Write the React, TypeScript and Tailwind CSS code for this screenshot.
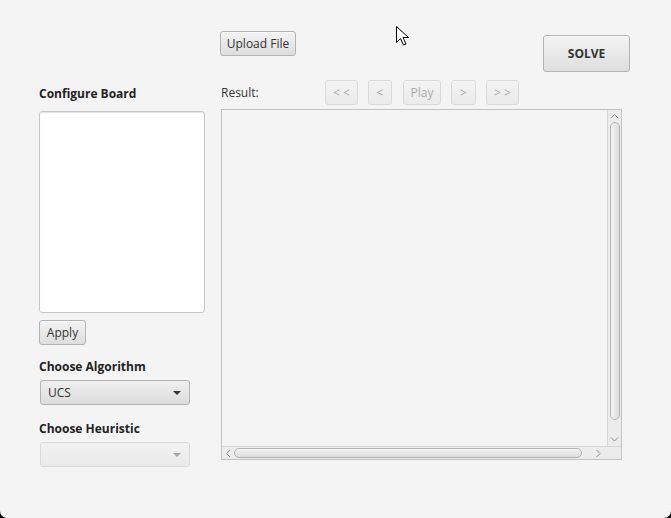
const font = { fontFamily: '"Open Sans", "Noto Sans", Arial, sans-serif' };

function Btn({ children, className = "" }: { children: React.ReactNode; className?: string }) {
  return (
    <div
      className={
        "flex items-center justify-center rounded-[3px] border border-[#b3b3b3] bg-gradient-to-b from-[#f3f3f3] to-[#dedede] text-[12px] text-[#333] shadow-[inset_0_1px_0_#fafafa] " +
        className
      }
    >
      {children}
    </div>
  );
}

function Combo({ value, disabled }: { value?: string; disabled?: boolean }) {
  return (
    <div
      className={
        "ml-px flex h-[25px] w-[150px] items-center justify-between rounded-[3px] border border-[#b3b3b3] bg-gradient-to-b from-[#f0f0f0] to-[#dcdcdc] pl-[7px] pr-[8px] text-[12px] text-[#333] " +
        (disabled ? "opacity-40" : "")
      }
    >
      <span>{value}</span>
      <svg width="8" height="4" viewBox="0 0 8 4">
        <path d="M0 0h8L4 4z" fill="#333" />
      </svg>
    </div>
  );
}

function Chevron({ dir }: { dir: "up" | "down" | "left" | "right" }) {
  const d = {
    up: "M1 5L4.5 1.5L8 5",
    down: "M1 1.5L4.5 5L8 1.5",
    left: "M5 1L1.5 4.5L5 8",
    right: "M1.5 1L5 4.5L1.5 8",
  }[dir];
  const vertical = dir === "up" || dir === "down";
  return (
    <svg width={vertical ? 9 : 7} height={vertical ? 7 : 9} viewBox={vertical ? "0 0 9 7" : "0 0 7 9"}>
      <path d={d} fill="none" stroke="#8a8a8a" strokeWidth="1" />
    </svg>
  );
}

export default function App() {
  return (
    <div className="bg-black">
      <div
        className="relative h-[518px] w-[671px] overflow-hidden rounded-b-[7px] bg-[#f4f4f4]"
        style={font}
      >
        <div className="flex pt-[31px]">
          {/* left column */}
          <div className="ml-[39px] mt-[55px] flex w-[166px] flex-col">
            <div className="text-[12px] font-bold leading-[16px] text-[#222]">Configure Board</div>
            <div className="mt-[9px] h-[202px] w-[166px] rounded-[3px] border border-[#c6c6c6] bg-white shadow-[inset_0_1px_1px_#e4e4e4]" />
            <Btn className="mt-[7px] h-[25px] w-[47px]">Apply</Btn>
            <div className="mt-[14px] text-[12px] font-bold leading-[16px] text-[#222]">Choose Algorithm</div>
            <div className="mt-[5px]">
              <Combo value="UCS" />
            </div>
            <div className="mt-[16px] text-[12px] font-bold leading-[16px] text-[#222]">Choose Heuristic</div>
            <div className="mt-[5px]">
              <Combo disabled />
            </div>
          </div>

          {/* right column */}
          <div className="ml-[16px] flex w-[409px] flex-col">
            <div className="flex h-[49px] items-start justify-between">
              <Btn className="-ml-px h-[25px] w-[76px]">Upload File</Btn>
              <Btn className="mt-[4px] h-[37px] w-[87px] font-bold">SOLVE</Btn>
            </div>
            <div className="flex h-[25px] items-center">
              <div className="w-[104px] text-[12px] text-[#333]">Result:</div>
              <div className="flex gap-[10px] opacity-40">
                <Btn className="h-[25px] w-[33px]">&lt; &lt;</Btn>
                <Btn className="h-[25px] w-[24px]">&lt;</Btn>
                <Btn className="ml-px h-[25px] w-[38px]">Play</Btn>
                <Btn className="h-[25px] w-[25px]">&gt;</Btn>
                <Btn className="h-[25px] w-[33px]">&gt; &gt;</Btn>
              </div>
            </div>

            {/* scroll pane */}
            <div className="mt-[4px] flex h-[351px] w-[401px] flex-col border border-[#c2c2c2] bg-[#f4f4f4]">
              <div className="flex flex-1">
                <div className="flex-1" />
                <div className="flex w-[14px] flex-col items-center border-l border-[#d6d6d6] bg-[#ececec]">
                  <div className="flex h-[12px] items-center">
                    <Chevron dir="up" />
                  </div>
                  <div className="h-[298px] w-[10px] rounded-[5px] border border-[#b3b3b3] bg-gradient-to-r from-[#f4f4f4] to-[#dcdcdc]" />
                  <div className="flex-1" />
                  <div className="flex h-[14px] items-center">
                    <Chevron dir="down" />
                  </div>
                </div>
              </div>
              <div className="flex h-[13px] items-center border-t border-[#d6d6d6] bg-[#ececec]">
                <div className="flex w-[12px] shrink-0 justify-center">
                  <Chevron dir="left" />
                </div>
                <div className="h-[10px] w-[348px] shrink-0 rounded-[5px] border border-[#b3b3b3] bg-gradient-to-b from-[#f4f4f4] to-[#dcdcdc]" />
                <div className="flex flex-1 justify-end pr-[5px]">
                  <Chevron dir="right" />
                </div>
                <div className="h-full w-[14px] shrink-0 bg-[#ececec]" />
              </div>
            </div>
          </div>
        </div>

        {/* mouse cursor */}
        <svg className="absolute left-[396px] top-[26px]" width="13" height="20" viewBox="0 0 13 20">
          <path d="M0.5 0.5V16.5L4.5 12.5L7.5 19L10 18L7 11.5H12.5Z" fill="white" stroke="black" strokeWidth="1" />
        </svg>
      </div>
    </div>
  );
}
